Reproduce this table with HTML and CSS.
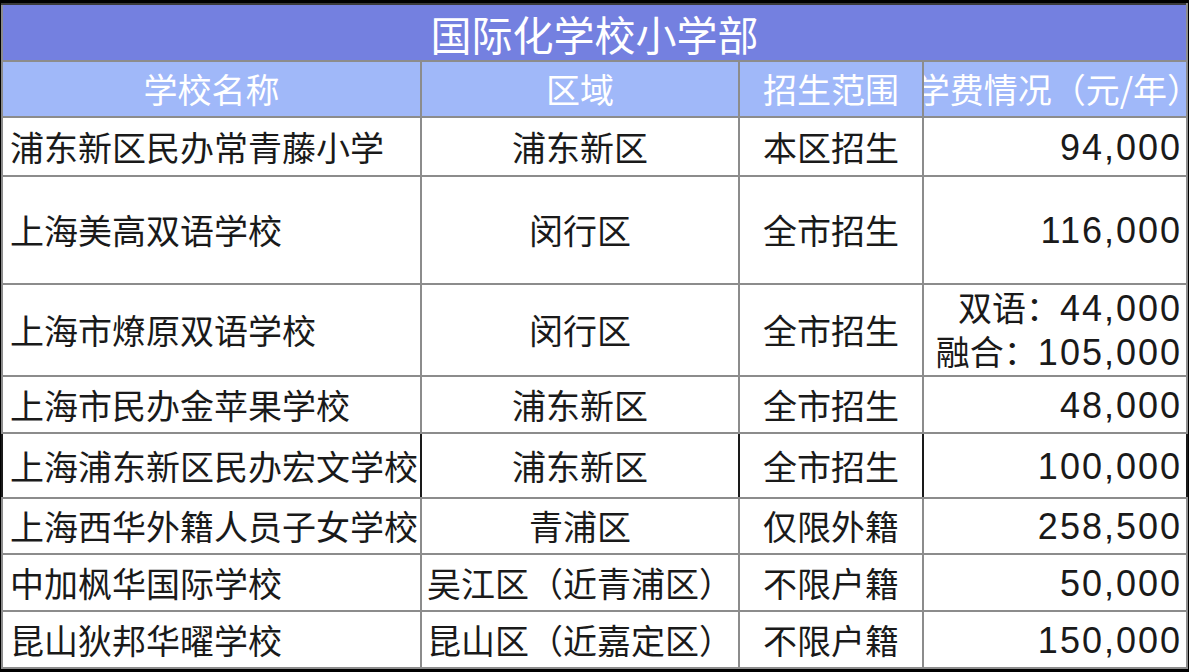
FILE: index.html
```html
<!DOCTYPE html>
<html lang="zh-CN">
<head>
<meta charset="utf-8">
<title>国际化学校小学部</title>
<link rel="stylesheet" href="styles.css">
</head>
<body>
<div class="frame">
  <table class="grid">
    <colgroup>
      <col class="c1">
      <col class="c2">
      <col class="c3">
      <col class="c4">
    </colgroup>
    <tr class="r-title">
      <td class="title" colspan="4">国际化学校小学部</td>
    </tr>
    <tr class="r-head">
      <td class="head">学校名称</td>
      <td class="head">区域</td>
      <td class="head">招生范围</td>
      <td class="head"><div class="head-clip"><span class="head-text">学费情况（元/年）</span></div></td>
    </tr>
    <tr class="r1">
      <td class="name">浦东新区民办常青藤小学</td>
      <td class="mid">浦东新区</td>
      <td class="mid">本区招生</td>
      <td class="fee"><span class="num">94,000</span></td>
    </tr>
    <tr class="r2">
      <td class="name">上海美高双语学校</td>
      <td class="mid">闵行区</td>
      <td class="mid">全市招生</td>
      <td class="fee"><span class="num">116,000</span></td>
    </tr>
    <tr class="r3">
      <td class="name">上海市燎原双语学校</td>
      <td class="mid">闵行区</td>
      <td class="mid">全市招生</td>
      <td class="fee fee-multi">
        <div class="fee-line">双语：<span class="num">44,000</span></div>
        <div class="fee-line">融合：<span class="num">105,000</span></div>
      </td>
    </tr>
    <tr class="r4">
      <td class="name">上海市民办金苹果学校</td>
      <td class="mid">浦东新区</td>
      <td class="mid">全市招生</td>
      <td class="fee"><span class="num">48,000</span></td>
    </tr>
    <tr class="r5 dark">
      <td class="name">上海浦东新区民办宏文学校</td>
      <td class="mid">浦东新区</td>
      <td class="mid">全市招生</td>
      <td class="fee"><span class="num">100,000</span></td>
    </tr>
    <tr class="r6">
      <td class="name">上海西华外籍人员子女学校</td>
      <td class="mid">青浦区</td>
      <td class="mid">仅限外籍</td>
      <td class="fee"><span class="num">258,500</span></td>
    </tr>
    <tr class="r7">
      <td class="name">中加枫华国际学校</td>
      <td class="mid">吴江区（近青浦区）</td>
      <td class="mid">不限户籍</td>
      <td class="fee"><span class="num">50,000</span></td>
    </tr>
    <tr class="r8">
      <td class="name">昆山狄邦华曜学校</td>
      <td class="mid">昆山区（近嘉定区）</td>
      <td class="mid">不限户籍</td>
      <td class="fee"><span class="num">150,000</span></td>
    </tr>
  </table>
</div>
</body>
</html>
```

FILE: styles.css
```css
html, body {
  margin: 0;
  padding: 0;
  background: #000;
}

.frame {
  width: 1189px;
  height: 672px;
  box-sizing: border-box;
  background: #000;
  padding: 3px 3px 2px 1px;
  overflow: hidden;
}

.grid {
  border-collapse: collapse;
  table-layout: fixed;
  width: 1185px;
  background: #fff;
  font-family: "Noto Sans CJK SC", "Noto Sans", sans-serif;
}

.c1 { width: 419px; }
.c2 { width: 318px; }
.c3 { width: 184px; }
.c4 { width: 264px; }

.grid td {
  border: 2px solid #8c8c8c;
  padding: 0;
  font-size: 34px;
  line-height: 42px;
  color: #1a1a1a;
  white-space: nowrap;
  vertical-align: middle;
}

.r-title { height: 57px; }
.r-head { height: 56px; }
.r1 { height: 59px; }
.r2 { height: 108px; }
.r3 { height: 92px; }
.r4 { height: 57px; }
.r5 { height: 65px; }
.r6 { height: 56px; }
.r7 { height: 57px; }
.r8 { height: 57px; }

.grid td.title {
  background: #7480e0;
  color: #fff;
  font-size: 41px;
  text-align: center;
  border-top-color: #3a3a3a;
}

.grid td.head {
  background: #a0b8f9;
  color: #fff;
  text-align: center;
}

.head-clip {
  display: flex;
  justify-content: flex-end;
  overflow: hidden;
  white-space: nowrap;
}

.head-text {
  flex: none;
  margin-right: -15px;
}

.grid td.name {
  text-align: left;
  padding-left: 7px;
}

.grid td.mid {
  text-align: center;
}

.grid td.fee {
  text-align: right;
  padding-right: 4px;
}

.num {
  font-family: "Liberation Sans", Arial, sans-serif;
  font-size: 36px;
  letter-spacing: 2px;
}

.fee-line {
  line-height: 42px;
}

.dark td {
  border-left-color: #1a1a1a;
  border-right-color: #1a1a1a;
}
```
